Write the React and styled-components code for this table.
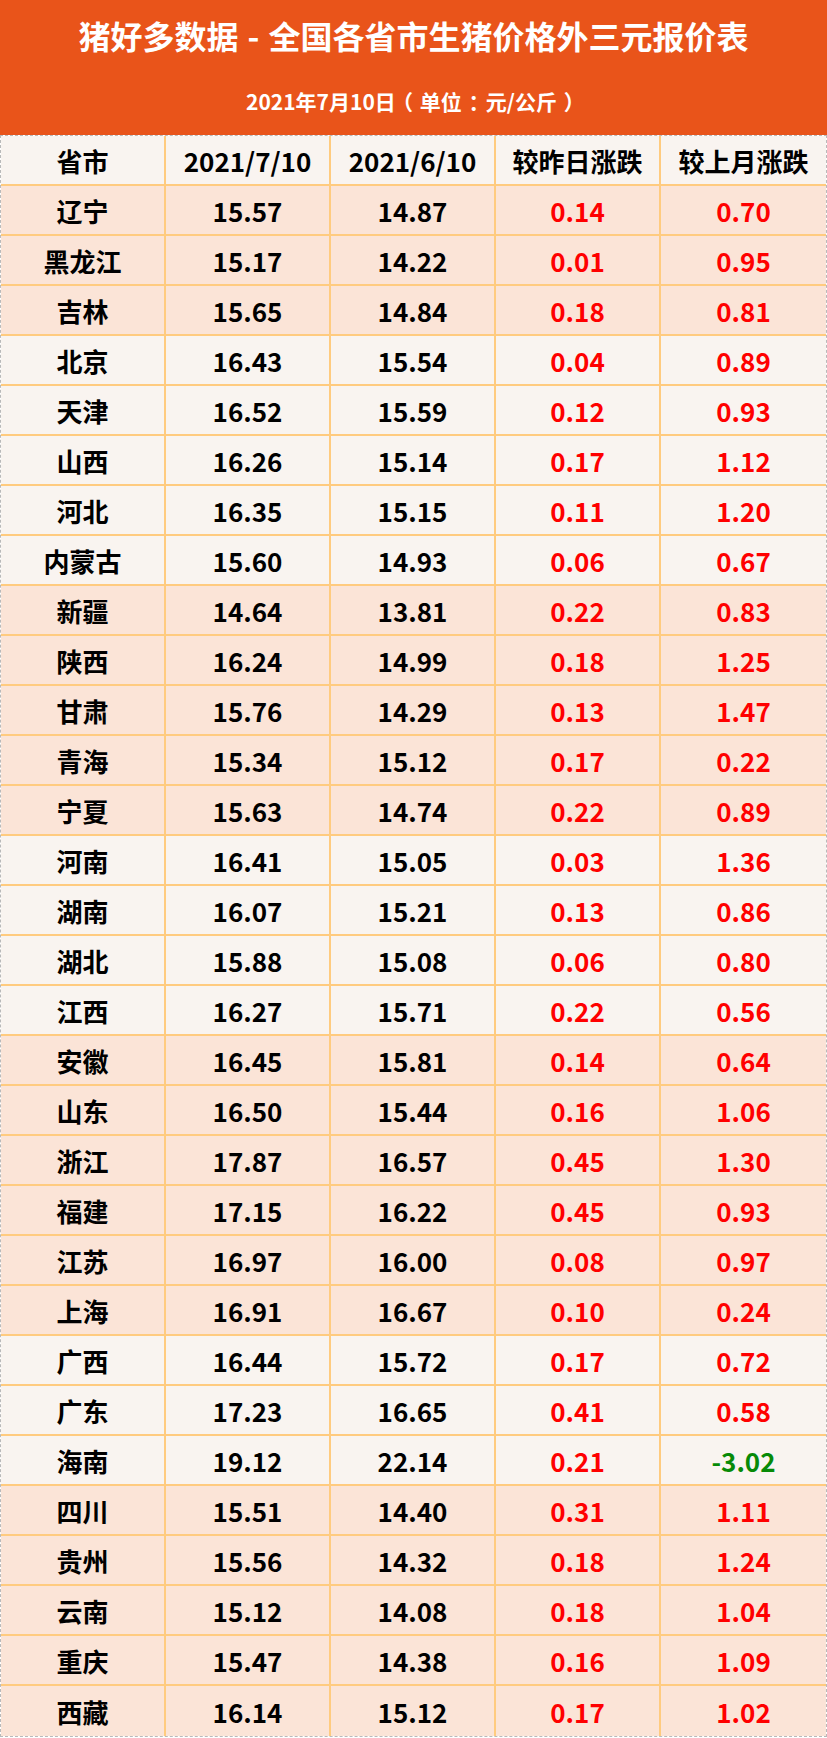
import React from "react";
import styled, { createGlobalStyle } from "styled-components";

const Global = createGlobalStyle`
  html, body { margin: 0; padding: 0; background: #ffffff; }
  body { font-family: "Noto Sans CJK SC", "Noto Sans", sans-serif; }
`;

const Page = styled.div`
  width: 827px;
  font-family: "Noto Sans CJK SC", "Noto Sans", sans-serif;
`;

const Banner = styled.div`
  height: 135px;
  background: #e9541a;
  color: #ffffff;
  display: flex;
  flex-direction: column;
  align-items: center;
  box-sizing: border-box;
`;

const Title = styled.h1`
  margin: 13px 0 0;
  font-size: 32px;
  line-height: 44px;
  font-weight: 700;
  white-space: nowrap;
`;

const Sep = styled.span`
  display: inline-block;
  margin: 0 9px;
`;

const Subtitle = styled.div`
  margin-top: 30px;
  font-size: 21px;
  line-height: 28px;
  font-weight: 700;
  white-space: nowrap;
`;

const Punct = styled.span`
  display: inline-block;
  width: 24px;
  text-align: center;
  font-feature-settings: "halt";
`;

const Table = styled.div`
  border: 1px dashed #b9b9b9;
  box-sizing: border-box;
  width: 827px;
`;

const Row = styled.div`
  display: grid;
  grid-template-columns: repeat(5, 1fr);
  height: 50px;
  box-sizing: border-box;
  background: ${(p) => (p.$tone === "peach" ? "#fbe4d7" : "#f9f4f0")};
  border-bottom: ${(p) => (p.$last ? "none" : "2px solid #ffcb7f")};
`;

const Cell = styled.div`
  display: flex;
  align-items: center;
  justify-content: center;
  font-size: 26px;
  font-weight: 700;
  color: ${(p) => p.$color || "#000000"};
  border-right: 2px solid #ffcb7f;
  &:last-child { border-right: none; }
`;

const groups = [
  ["peach", [
    ["辽宁", "15.57", "14.87", "0.14", "0.70"],
    ["黑龙江", "15.17", "14.22", "0.01", "0.95"],
    ["吉林", "15.65", "14.84", "0.18", "0.81"],
  ]],
  ["light", [
    ["北京", "16.43", "15.54", "0.04", "0.89"],
    ["天津", "16.52", "15.59", "0.12", "0.93"],
    ["山西", "16.26", "15.14", "0.17", "1.12"],
    ["河北", "16.35", "15.15", "0.11", "1.20"],
    ["内蒙古", "15.60", "14.93", "0.06", "0.67"],
  ]],
  ["peach", [
    ["新疆", "14.64", "13.81", "0.22", "0.83"],
    ["陕西", "16.24", "14.99", "0.18", "1.25"],
    ["甘肃", "15.76", "14.29", "0.13", "1.47"],
    ["青海", "15.34", "15.12", "0.17", "0.22"],
    ["宁夏", "15.63", "14.74", "0.22", "0.89"],
  ]],
  ["light", [
    ["河南", "16.41", "15.05", "0.03", "1.36"],
    ["湖南", "16.07", "15.21", "0.13", "0.86"],
    ["湖北", "15.88", "15.08", "0.06", "0.80"],
    ["江西", "16.27", "15.71", "0.22", "0.56"],
  ]],
  ["peach", [
    ["安徽", "16.45", "15.81", "0.14", "0.64"],
    ["山东", "16.50", "15.44", "0.16", "1.06"],
    ["浙江", "17.87", "16.57", "0.45", "1.30"],
    ["福建", "17.15", "16.22", "0.45", "0.93"],
    ["江苏", "16.97", "16.00", "0.08", "0.97"],
    ["上海", "16.91", "16.67", "0.10", "0.24"],
  ]],
  ["light", [
    ["广西", "16.44", "15.72", "0.17", "0.72"],
    ["广东", "17.23", "16.65", "0.41", "0.58"],
    ["海南", "19.12", "22.14", "0.21", "-3.02"],
  ]],
  ["peach", [
    ["四川", "15.51", "14.40", "0.31", "1.11"],
    ["贵州", "15.56", "14.32", "0.18", "1.24"],
    ["云南", "15.12", "14.08", "0.18", "1.04"],
    ["重庆", "15.47", "14.38", "0.16", "1.09"],
    ["西藏", "16.14", "15.12", "0.17", "1.02"],
  ]],
];

const rows = groups.flatMap(([tone, list]) => list.map((r) => ({ tone, r })));

const changeColor = (v) => (v.startsWith("-") ? "#078a07" : "#ff0000");

export default function App() {
  return (
    <Page>
      <Global />
      <Banner>
        <Title>
          猪好多数据<Sep>-</Sep>全国各省市生猪价格外三元报价表
        </Title>
        <Subtitle>
          2021年7月10日<Punct>（</Punct>单位<Punct>：</Punct>元/公斤<Punct>）</Punct>
        </Subtitle>
      </Banner>
      <Table>
        <Row $tone="light">
          <Cell>省市</Cell>
          <Cell>2021/7/10</Cell>
          <Cell>2021/6/10</Cell>
          <Cell>较昨日涨跌</Cell>
          <Cell>较上月涨跌</Cell>
        </Row>
        {rows.map(({ tone, r }, i) => (
          <Row key={r[0]} $tone={tone} $last={i === rows.length - 1}>
            <Cell>{r[0]}</Cell>
            <Cell>{r[1]}</Cell>
            <Cell>{r[2]}</Cell>
            <Cell $color={changeColor(r[3])}>{r[3]}</Cell>
            <Cell $color={changeColor(r[4])}>{r[4]}</Cell>
          </Row>
        ))}
      </Table>
    </Page>
  );
}
